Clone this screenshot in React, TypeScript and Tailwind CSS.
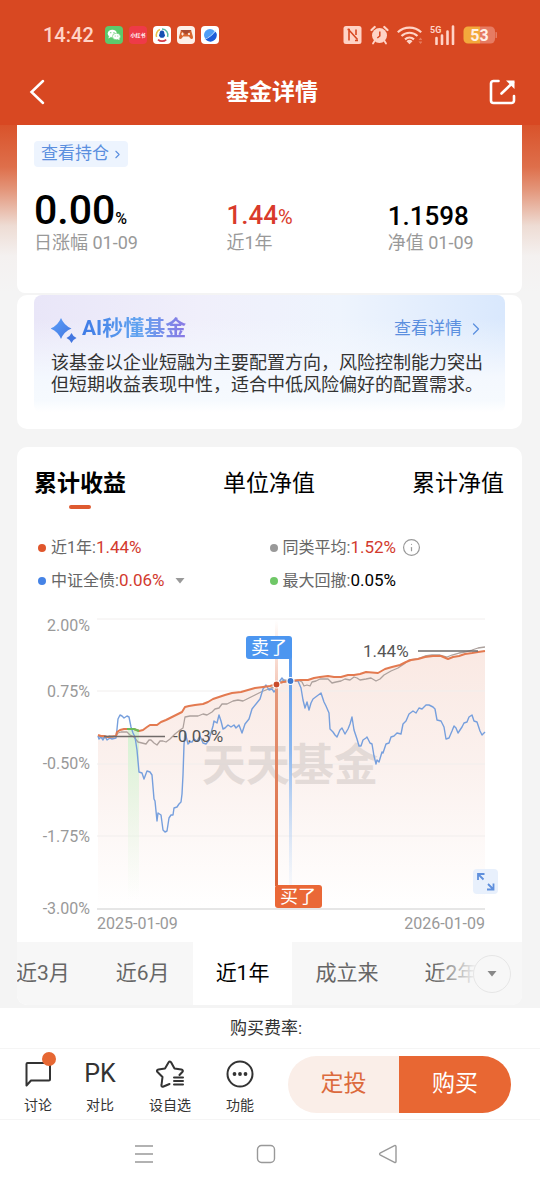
import { ChevronRight, Info } from "lucide-react";

const returnTabs = ["累计收益", "单位净值", "累计净值"];

const ranges = ["近3月", "近6月", "近1年", "成立来", "近2年"];

const stats = [
  { label: "近1年", value: "1.44%", dot: "bg-[#e0562c]", color: "text-[#d23a2e]", extra: null },
  { label: "同类平均", value: "1.52%", dot: "bg-[#999999]", color: "text-[#d23a2e]", extra: "info" },
  { label: "中证全债", value: "0.06%", dot: "bg-[#4583e6]", color: "text-[#d23a2e]", extra: "caret" },
  { label: "最大回撤", value: "0.05%", dot: "bg-[#6fc767]", color: "text-black", extra: null },
];

const yAxis = [
  { label: "2.00%", line: 619, text: 631 },
  { label: "0.75%", line: 691, text: 697 },
  { label: "-0.50%", line: 764, text: 769 },
  { label: "-1.75%", line: 836, text: 842 },
  { label: "-3.00%", line: 909, text: 914 },
];

const fundLine =
  "98,735 101,736 104,736 108,737 116,736 117,732 120,730 124,729 134,729 139,731 143,730 147,727 150,725 157,725 161,722 166,720 172,717 178,714 182,712 185,707 189,706 195,705 203,704 208,702 213,699 219,697 225,695 232,693 241,692 248,690 255,688 263,687 270,686 277,684 283,682 291,681 300,680 308,680 314,678 320,677 328,676 334,677 341,677 348,675 354,675 360,674 366,672 378,673 385,669 392,667 400,665 406,662 411,660 418,659 425,657 433,656 441,656 448,659 453,657 459,656 465,654 472,653 478,652 485,651";

const peerLine =
  "98,736 102,737 105,738 109,736 113,737 116,736 118,733 121,732 127,732 130,735 134,737 138,742 142,743 146,744 149,740 151,740 154,743 157,745 160,741 163,741 166,742 170,739 175,734 180,730 183,728 185,717 190,716 198,716 203,714 207,715 212,712 215,709 219,708 222,704 227,704 233,701 238,700 243,701 249,698 255,695 261,692 266,690 271,688 276,687 280,682 284,680 291,681 298,680 302,682 304,686 307,685 310,686 312,682 316,681 320,679 328,679 332,683 336,682 341,681 345,679 350,680 354,677 357,678 360,680 366,679 371,678 376,681 380,679 384,675 391,671 398,668 404,664 409,660 417,659 425,656 432,655 440,655 447,657 452,655 459,653 465,652 472,650 478,648 485,647";

const bondLine =
  "98,736 99,739 101,737 103,740 105,736 107,740 110,738 112,739 116,738 117,729 118,719 120,715 122,716 124,718 127,716 129,717 131,727 133,733 135,737 137,750 139,772 142,773 144,779 147,771 150,772 152,775 154,799 155,801 157,821 158,813 161,815 163,830 165,832 167,831 169,818 171,815 173,815 174,808 177,807 179,804 181,802 182,794 183,775 184,745 185,732 188,744 190,742 192,742 194,739 197,741 200,736 203,743 206,744 209,740 211,733 213,726 214,721 217,723 219,715 221,721 223,729 225,728 228,725 231,727 234,725 236,728 239,725 242,733 245,724 249,719 252,709 256,704 260,699 263,689 266,685 269,690 272,689 274,692 277,688 279,682 282,678 285,682 288,680 291,681 298,681 301,688 303,700 305,708 307,702 309,710 311,703 313,699 317,696 321,693 324,702 326,706 329,713 330,729 333,732 335,735 337,737 340,730 342,728 345,734 348,729 350,724 352,717 354,730 357,739 359,746 361,746 363,740 366,738 367,737 370,743 372,744 374,756 376,764 377,760 379,762 382,752 383,753 386,744 389,743 391,737 394,736 397,733 401,734 403,724 406,721 409,714 413,711 416,713 419,708 422,709 426,705 429,705 433,707 435,709 437,720 441,721 444,727 446,739 449,738 452,731 454,726 456,728 458,733 462,727 464,723 467,722 469,717 472,715 474,721 477,722 480,731 482,735 485,732";

function StatusBar() {
  return (
    <div className="flex h-[70px] items-center justify-between px-[43px]">
      <div className="flex items-center gap-1.5">
        <span className="mr-[5px] text-xl font-medium text-[#ffd3c6]">14:42</span>
        <svg width="18" height="18" viewBox="0 0 18 18">
          <rect width="18" height="18" rx="4" fill="#5cc96c" />
          <ellipse cx="7.3" cy="7.6" rx="4.6" ry="3.9" fill="#fff" />
          <path d="M4 10l-.6 2.4L6 11z" fill="#fff" />
          <ellipse cx="11.4" cy="10.5" rx="4" ry="3.3" fill="#fff" stroke="#5cc96c" strokeWidth=".6" />
          <path d="M12.5 13l2 1.2-.3-2z" fill="#fff" />
          <circle cx="5.8" cy="6.7" r=".6" fill="#5cc96c" />
          <circle cx="9" cy="6.7" r=".6" fill="#5cc96c" />
          <circle cx="10.2" cy="9.9" r=".5" fill="#5cc96c" />
          <circle cx="12.8" cy="9.9" r=".5" fill="#5cc96c" />
        </svg>
        <svg width="18" height="18" viewBox="0 0 18 18">
          <rect width="18" height="18" rx="4" fill="#ee3a48" />
          <text x="9" y="11" textAnchor="middle" fontSize="5" fontWeight="700" fill="#fff">小红书</text>
        </svg>
        <svg width="18" height="18" viewBox="0 0 18 18" fill="none">
          <rect width="18" height="18" rx="4" fill="#fff" />
          <path d="M3.6 11A6 6 0 0 1 7 3.5" stroke="#e9c04a" strokeWidth="1.5" />
          <path d="M9 3a6 6 0 0 1 5.6 8" stroke="#56b9a3" strokeWidth="1.5" />
          <path d="M5 13.6a6 6 0 0 0 8.2 0" stroke="#d33a4a" strokeWidth="1.7" />
          <path d="M9 4.6c2 0 2.4 1.7 2.4 3.1.9 1.4.7 2.3.2 2.6-.5 1.3-1.2 1.5-2.6 1.5s-2.1-.2-2.6-1.5c-.5-.3-.7-1.2.2-2.6 0-1.4.4-3.1 2.4-3.1z" fill="#174fb2" />
        </svg>
        <svg width="18" height="18" viewBox="0 0 18 18">
          <rect width="18" height="18" rx="4" fill="#fdf0e8" />
          <path d="M4 4h10l2 7c.3 2-1.8 3-3 1l-1-1.5H6L5 12c-1.2 2-3.3 1-3-1z" fill="#d9672f" />
          <path d="M3.5 4L9 8.5 14.5 4z" fill="#a84b30" />
          <path d="M5.5 6.5v3M4 8h3" stroke="#fff" strokeWidth=".8" />
          <circle cx="12" cy="8" r="1" fill="#fff" />
        </svg>
        <svg width="18" height="18" viewBox="0 0 18 18">
          <rect width="18" height="18" rx="4" fill="#fff" />
          <circle cx="9" cy="9" r="6" fill="#4f9df5" />
          <path d="M4 12.500C9 11 13 8 14.500 5.500a6.300 6.300 0 0 1-9 8.700z" fill="#1d5cd8" />
          <path d="M3 13.500c5-1.500 9-5 12-9.500" stroke="#d5eaff" strokeWidth=".8" fill="none" />
        </svg>
      </div>
      <div className="flex items-center gap-2 text-[#ffd3c6]">
        <svg width="19" height="20" viewBox="0 0 19 20">
          <rect x=".5" y="1" width="18" height="18" rx="2.5" fill="currentColor" />
          <path d="M6 15.500V5L14.500 14.500M13 4.500V10M4.500 4.500H7M12 15.500H15" fill="none" stroke="#d84822" strokeWidth="1.600" />
        </svg>
        <svg width="19" height="20" viewBox="0 0 19 20" fill="none" stroke="currentColor">
          <circle cx="9.5" cy="10.5" r="7.5" fill="currentColor" stroke="none" />
          <path d="M1.5 5l3.2-3M17.5 5l-3.2-3" strokeWidth="2.2" strokeLinecap="round" />
          <path d="M4.5 16L3 18.500M14.500 16l1.500 2.500" strokeWidth="1.800" strokeLinecap="round" />
          <path d="M9.800 6.500V11l-2.500 2" stroke="#d84822" strokeWidth="1.500" />
        </svg>
        <svg width="25" height="20" viewBox="0 0 25 20" fill="none" stroke="currentColor" strokeWidth="2.2">
          <path d="M.8 7.2a17 17 0 0 1 23.4 0M4.5 11a11.5 11.5 0 0 1 16 0M8 14.300a7 7 0 0 1 9 0" />
          <path d="M9.500 16.200a4.500 4.500 0 0 1 6 0l-3 3z" fill="currentColor" stroke="none" />
          <path d="M21.500 15l2-2.500 2 2.500zM21.500 16.500l2 2.500 2-2.500z" fill="#e67b5e" stroke="none" />
        </svg>
        <svg width="25" height="20" viewBox="0 0 25 20">
          <text x="0" y="8" fontSize="9" fontWeight="700" fill="currentColor">5G</text>
          <path d="M6.500 13v6M12 10.500V19M17.500 6.500V19M23 1.500V19" stroke="currentColor" strokeWidth="2.600" strokeLinecap="round" />
        </svg>
        <svg width="34" height="20" viewBox="0 0 34 20">
          <path d="M5 1.500h12v17H5a4.500 4.500 0 0 1-4.500-4.500V6A4.500 4.500 0 0 1 5 1.500z" fill="#f3a93c" />
          <path d="M17 1.500h10.500A4.500 4.500 0 0 1 32 6v8a4.500 4.500 0 0 1-4.500 4.500H17z" fill="#e67b62" />
          <path d="M32.500 7a3 3 0 0 1 0 6z" fill="#e67b62" />
          <text x="16.500" y="15.500" textAnchor="middle" fontSize="16" fontWeight="700" fill="#fff0e6">53</text>
        </svg>
      </div>
    </div>
  );
}

function Header() {
  return (
    <header className="h-[125px] bg-[#d84822]">
      <StatusBar />
      <div className="flex h-11 items-center justify-between pr-6 pl-7">
        <button aria-label="返回" className="w-7">
          <svg width="18" height="26" viewBox="0 0 18 26" fill="none" stroke="#fff" strokeWidth="2.500" strokeLinecap="round">
            <path d="M15 2L3.500 13 15 24" />
          </svg>
        </button>
        <h1 className="pt-0.5 text-[23px] leading-8 font-bold text-white">基金详情</h1>
        <button aria-label="分享">
          <svg width="28" height="28" viewBox="0 0 28 28" fill="none" stroke="#fff" strokeWidth="2.600" strokeLinecap="round">
            <path d="M10.500 3H5.500A2.500 2.500 0 0 0 3 5.500v17A2.500 2.500 0 0 0 5.500 25h18a2.500 2.500 0 0 0 2.500-2.500V18" />
            <path d="M13.500 15.500L25 4.500" />
            <path d="M18 2.500h8.500V11z" fill="#fff" stroke="none" />
          </svg>
        </button>
      </div>
    </header>
  );
}

function Summary() {
  return (
    <section className="bg-[linear-gradient(#d9532b,#de6f4b_25%,#e39478_38%,#eedcd4_60%,#f4f1f0_78%,#f4f4f4)] pr-[18px] pl-[17px]">
      <div className="h-[168px] rounded-b-lg bg-white px-[17px] pt-4">
        <button className="flex h-[26px] items-center gap-0.5 rounded-sm bg-[#edf4fe] pr-1 pl-[7px] text-[17px] text-[#5b8fdf]">
          查看持仓
          <ChevronRight size={13} strokeWidth={2} />
        </button>
        <div className="mt-[23px] grid grid-cols-[192fr_161fr_117fr] items-end">
          <div>
            <p className="text-[41px] leading-10 font-medium text-black">
              0.00<span className="text-base">%</span>
            </p>
            <p className="text-lg leading-6 text-[#999999]">日涨幅 01-09</p>
          </div>
          <div>
            <p className="text-[26px] leading-[30px] font-medium text-[#d93a2b]">
              1.44<span className="text-xl font-normal">%</span>
            </p>
            <p className="text-lg leading-6 text-[#999999]">近1年</p>
          </div>
          <div>
            <p className="text-[26px] leading-[30px] font-medium text-black">1.1598</p>
            <p className="text-lg leading-6 text-[#999999]">净值 01-09</p>
          </div>
        </div>
      </div>
    </section>
  );
}

function AiCard() {
  return (
    <section className="mt-0.5 mr-[18px] ml-[17px] rounded-[10px] bg-white px-[17px] pb-[17px]">
      <div className="rounded-lg bg-[linear-gradient(to_bottom,transparent_20%,#f4f8fe_70%,#f6fafe_90%,#ffffff),linear-gradient(to_right,#e9e6f8,#f0effb_35%,#eef4fd_65%,#d9e8fd)] px-[17px] pt-[19px] pb-4">
        <div className="flex h-[30px] items-center justify-between">
          <h2 className="flex items-center gap-1 text-[21px] font-bold">
            <svg width="27" height="27" viewBox="0 0 27 27">
              <defs>
                <linearGradient id="spark" x2="1" y2="1">
                  <stop stopColor="#5ba0fa" />
                  <stop offset="1" stopColor="#4376e0" />
                </linearGradient>
              </defs>
              <path d="M10 2q3 7.500 10.500 10.500Q13 15.500 10 23 7 15.500-.5 12.500 7 9.500 10 2z" fill="url(#spark)" />
              <path d="M20.500 17q1.500 3.500 5 5-3.500 1.500-5 5-1.500-3.500-5-5 3.500-1.500 5-5z" fill="#4376e0" />
            </svg>
            <span className="bg-[linear-gradient(to_right,#3f7be6,#62a4f0_55%,#8a78e4)] bg-clip-text text-transparent">AI秒懂基金</span>
          </h2>
          <a href="#ai" className="flex items-center gap-1 pr-0.5 text-[17px] text-[#5b8fdf]">
            查看详情
            <ChevronRight size={20} strokeWidth={1.500} />
          </a>
        </div>
        <p className="mt-2 -mr-3 text-lg leading-[22px] text-[#333333]">
          该基金以企业短融为主要配置方向，风险控制能力突出
          <br />
          但短期收益表现中性，适合中低风险偏好的配置需求。
        </p>
      </div>
    </section>
  );
}

function Chart() {
  return (
    <div className="relative">
      <svg viewBox="17 597 505 345" className="block w-full">
        <defs>
          <linearGradient id="area" x1="0" y1="650" x2="0" y2="909" gradientUnits="userSpaceOnUse">
            <stop stopColor="#fae9e3" />
            <stop offset=".45" stopColor="#fbf1ee" />
            <stop offset="1" stopColor="#ffffff" />
          </linearGradient>
          <linearGradient id="drawdown" x1="0" y1="729" x2="0" y2="900" gradientUnits="userSpaceOnUse">
            <stop stopColor="#d5f2d2" />
            <stop offset="1" stopColor="#e8f8e6" stopOpacity="0" />
          </linearGradient>
          <linearGradient id="buy" x1="0" y1="620" x2="0" y2="885" gradientUnits="userSpaceOnUse">
            <stop stopColor="#f0a78d" stopOpacity="0" />
            <stop offset=".24" stopColor="#f0b29c" stopOpacity=".7" />
            <stop offset=".25" stopColor="#e59a7d" />
            <stop offset="1" stopColor="#dc6438" />
          </linearGradient>
          <linearGradient id="sell" x1="0" y1="659" x2="0" y2="890" gradientUnits="userSpaceOnUse">
            <stop stopColor="#5c9cee" />
            <stop offset=".4" stopColor="#8ab7f0" />
            <stop offset="1" stopColor="#c5dcf8" stopOpacity=".1" />
          </linearGradient>
        </defs>

        <polygon points={`98,909 ${fundLine} 485,909`} fill="url(#area)" />
        {yAxis.map((tick) => (
          <g key={tick.label}>
            <line x1="97" x2="485" y1={tick.line} y2={tick.line} stroke={tick.line === 909 ? "#e6e6e6" : "#f1eeed"} strokeWidth={tick.line === 909 ? 2 : 1} />
            <text x="90" y={tick.text} textAnchor="end" fontSize="16" fill="#999999">{tick.label}</text>
          </g>
        ))}
        <rect x="128" y="729" width="11" height="171" fill="url(#drawdown)" />
        <text x="202" y="781" fontSize="44" fontWeight="700" fill="#d3cbc8" fillOpacity=".6">天天基金</text>

        <g fill="none" strokeLinejoin="round">
          <polyline points={peerLine} stroke="#ada19d" strokeWidth="1.300" />
          <polyline points={bondLine} stroke="#769fdd" strokeWidth="1.400" />
          <polyline points={fundLine} stroke="#e37a50" strokeWidth="2" />
          <path d="M127 729h7l5 2" stroke="#6dbb5a" strokeWidth="2" />
        </g>

        <path d="M104 736.500h61M418 651h60" stroke="#6f6a68" strokeWidth="1.500" />
        <text x="173" y="742" fontSize="17" fill="#555555">-0.03%</text>
        <text x="363" y="657" fontSize="17" fill="#555555">1.44%</text>

        <rect x="275" y="620" width="3" height="266" fill="url(#buy)" />
        <rect x="289" y="650" width="3" height="240" fill="url(#sell)" />
        <rect x="246" y="636" width="46" height="23" rx="3" fill="#4c96f0" />
        <text x="269" y="654" textAnchor="middle" fontSize="18" fill="#fff">卖了</text>
        <rect x="275" y="885" width="47" height="23" rx="3" fill="#ea6837" />
        <text x="298" y="903" textAnchor="middle" fontSize="18" fill="#fff">买了</text>
        <circle cx="276.500" cy="684.500" r="3.500" fill="#c94b2b" stroke="#fff" strokeWidth="1.200" />
        <circle cx="290.500" cy="681" r="3.500" fill="#3b75cc" stroke="#fff" strokeWidth="1.200" />

        <text x="97" y="929" fontSize="16" fill="#999999">2025-01-09</text>
        <text x="485" y="929" textAnchor="end" fontSize="16" fill="#999999">2026-01-09</text>
      </svg>
      <button aria-label="全屏" className="absolute right-6 bottom-12 rounded-sm bg-[#e8f0fc]">
        <svg width="25" height="25" viewBox="0 0 25 25" fill="none" stroke="#5f8fdc" strokeWidth="1.800">
          <path d="M5 11V5h6.500M5 5l5.500 5.500M20.500 14.500v6H14M20.500 20.500L15 15" />
        </svg>
      </button>
    </div>
  );
}

function Performance() {
  return (
    <section className="mt-[18px] mr-[18px] ml-[17px] overflow-hidden rounded-[10px] bg-white">
      <div className="flex justify-between pt-[23px] pr-[18px] pl-[17px]">
        {returnTabs.map((tab, index) => (
          <button key={tab} className={index === 0 ? "flex flex-col items-center text-[23px] leading-7 font-bold text-black" : "flex flex-col items-center text-[23px] leading-7 text-black"}>
            {tab}
            {index === 0 ? <span className="mt-[7px] h-1 w-[22px] rounded-full bg-[#de5a30]" /> : null}
          </button>
        ))}
      </div>

      <div className="mt-[22px] grid grid-cols-2 px-[21px]">
        {stats.map((stat) => (
          <div key={stat.label} className="flex h-[33px] items-center text-base">
            <span className={`mr-[5px] size-2 rounded-full ${stat.dot}`} />
            <span className="text-[#666666]">{stat.label}:</span>
            <span className={`text-[17px] ${stat.color}`}>{stat.value}</span>
            {stat.extra === "info" ? <Info size={19} strokeWidth={1.500} className="ml-1.5 text-[#999999]" /> : null}
            {stat.extra === "caret" ? (
              <svg width="10" height="6" viewBox="0 0 10 6" className="ml-2.5" fill="#999999">
                <path d="M.5 0h9L5 5.500z" />
              </svg>
            ) : null}
          </div>
        ))}
      </div>

      <Chart />

      <div className="relative flex h-[63px] overflow-hidden bg-[#f7f7f7]">
        <div className="-ml-6 flex">
          {ranges.map((range) => (
            <button key={range} className={range === "近1年" ? "shrink-0 bg-white px-[23px] text-[21px] text-black" : "shrink-0 px-[23px] text-[21px] text-[#666666]"}>
              {range}
            </button>
          ))}
        </div>
        <div className="absolute inset-y-0 right-0 flex items-center bg-[linear-gradient(to_right,transparent,#f7f7f7_50%)] pr-[11px] pl-10">
          <button aria-label="更多区间" className="flex size-[38px] items-center justify-center rounded-full border border-[#e6e6e6] bg-[#f7f7f7]">
            <svg width="10" height="6" viewBox="0 0 10 6" fill="#888888">
              <path d="M.5 0h9L5 5.500z" />
            </svg>
          </button>
        </div>
      </div>
    </section>
  );
}

function Actions() {
  return (
    <footer className="mt-[3px] bg-white text-[#333333]">
      <p className="h-10 pr-2 text-center text-[17px] leading-10">购买费率:</p>
      <div className="flex h-[72px] items-center justify-between border-y border-[#f5f5f5] pr-[29px] pl-[17px]">
        <div className="flex gap-5 pt-1.5 text-sm leading-5">
          <button className="relative flex w-[42px] flex-col items-center gap-[7px]">
            <svg width="28" height="28" viewBox="0 0 28 28" fill="none" stroke="currentColor" strokeWidth="2" strokeLinejoin="round">
              <path d="M2.500 25.500V4a1 1 0 0 1 1-1h21.500a1 1 0 0 1 1 1v15.500a1 1 0 0 1-1 1H7z" />
            </svg>
            讨论
            <span className="absolute -top-2 right-[3px] size-3.5 rounded-full bg-[#e66733]" />
          </button>
          <button className="flex w-[42px] flex-col items-center gap-[7px]">
            <span className="text-[25px] leading-7">PK</span>
            对比
          </button>
          <button className="flex w-[58px] flex-col items-center gap-[7px]">
            <svg width="30" height="28" viewBox="0 0 30 28" fill="none" stroke="currentColor" strokeWidth="2" strokeLinejoin="round" strokeLinecap="round">
              <path d="M14.500 24L8.500 26.500c-1.500.7-2.300 0-2-1.500L7.500 17 2.500 12c-1-1-.5-2.200 1-2.500l6.500-1L13.500 2.500c.8-1.300 2-1.300 2.700 0L19.500 8.500l6.800 1c1.500.3 2 1.500 1 2.500L24.500 15" />
              <path d="M19 17.500h9M19 21h9M19 24.500h9" />
            </svg>
            设自选
          </button>
          <button className="flex w-[42px] flex-col items-center gap-[7px]">
            <svg width="28" height="28" viewBox="0 0 28 28">
              <circle cx="14" cy="14" r="12.500" fill="none" stroke="currentColor" strokeWidth="2" />
              <circle cx="8.500" cy="14" r="1.900" fill="currentColor" />
              <circle cx="14" cy="14" r="1.900" fill="currentColor" />
              <circle cx="19.500" cy="14" r="1.900" fill="currentColor" />
            </svg>
            功能
          </button>
        </div>
        <div className="flex h-[57px] overflow-hidden rounded-full text-[23px]">
          <button className="w-[111px] bg-[#faeee8] text-[#dc6a3d]">定投</button>
          <button className="w-[112px] bg-[#e86733] text-white">购买</button>
        </div>
      </div>
      <nav className="flex h-[67px] items-center justify-center gap-[102px] pr-[9px]">
        <button aria-label="最近任务">
          <svg width="20" height="20" viewBox="0 0 20 20" stroke="#999999" strokeWidth="1.500">
            <path d="M1 2h18M1 10h18M1 18h18" />
          </svg>
        </button>
        <button aria-label="主屏幕">
          <svg width="20" height="20" viewBox="0 0 20 20" fill="none" stroke="#999999" strokeWidth="1.400">
            <rect x="1.500" y="1.500" width="17" height="17" rx="4" />
          </svg>
        </button>
        <button aria-label="后退">
          <svg width="20" height="20" viewBox="0 0 20 20" fill="none" stroke="#999999" strokeWidth="1.400" strokeLinejoin="round">
            <path d="M2 9.200L16.500 1.600a1 1 0 0 1 1.500.9v15a1 1 0 0 1-1.500.9L2 10.800a1 1 0 0 1 0-1.600z" />
          </svg>
        </button>
      </nav>
    </footer>
  );
}

export default function App() {
  return (
    <div className="bg-[#f4f4f4] font-[Roboto,'Noto_Sans_CJK_SC',sans-serif]">
      <Header />
      <main>
        <Summary />
        <AiCard />
        <Performance />
      </main>
      <Actions />
    </div>
  );
}
